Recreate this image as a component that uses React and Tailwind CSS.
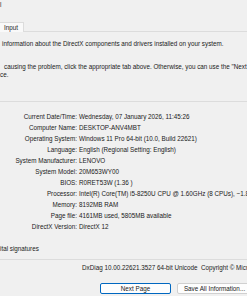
import React from 'react';

// DxDiag "System" page, cropped
const rows = [
  ['Current Date/Time:', 'Wednesday, 07 January 2026, 11:45:26'],
  ['Computer Name:', 'DESKTOP-ANV4MBT'],
  ['Operating System:', 'Windows 11 Pro 64-bit (10.0, Build 22621)'],
  ['Language:', 'English (Regional Setting: English)'],
  ['System Manufacturer:', 'LENOVO'],
  ['System Model:', '20M653WY00'],
  ['BIOS:', 'R0RET53W (1.36 )'],
  ['Processor:', 'Intel(R) Core(TM) i5-8250U CPU @ 1.60GHz (8 CPUs), ~1.8GHz'],
  ['Memory:', '8192MB RAM'],
  ['Page file:', '4161MB used, 5805MB available'],
  ['DirectX Version:', 'DirectX 12'],
];

export default function App() {
  return (
    <div className="w-[247px] h-[296px] overflow-hidden bg-[#f0f0f0] text-[#1a1a1a] text-[6.3px] font-['Liberation_Sans',Arial,sans-serif] whitespace-nowrap">
      {/* tab strip */}
      <div className="h-[22px] pt-[1px] leading-[8px]">l</div>
      <div className="h-[10px] border-b border-[#dcdcdc] flex">
        <div className="w-[24px] h-[10px] bg-[#f9f9f9] border-t border-r border-[#dcdcdc] pl-[4px] leading-[9px]">Input</div>
      </div>

      {/* intro text */}
      <div className="leading-[8px]">
        <div className="mt-[8px] pl-[2px]">information about the DirectX components and drivers installed on your system.</div>
        <div className="mt-[15px] pl-[4px]">causing the problem, click the appropriate tab above. Otherwise, you can use the "Next Page" button below to visit each page in sequence.</div>
        <div>ce.</div>
      </div>

      {/* system information group */}
      <div className="mt-[22px] border-t border-[#dcdcdc] pt-[8.5px]">
        {rows.map(([label, value]) => (
          <div key={label} className="flex h-[11.1px] leading-[11px]">
            <div className="w-[77px] text-right shrink-0">{label}</div>
            <div className="pl-[2px]">{value}</div>
          </div>
        ))}
      </div>

      <div className="mt-[12px] leading-[8px]">ital signatures</div>

      <div className="mt-[6px] border-t border-[#dcdcdc] h-[16px] leading-[16px] pl-[82px]">
        DxDiag 10.00.22621.3527 64-bit Unicode&nbsp; Copyright © Microsoft. All rights reserved.
      </div>

      {/* buttons */}
      <div className="mt-[8px] flex gap-[6px] pl-[100px]">
        <button className="w-[71px] h-[11px] shrink-0 rounded-[2px] border border-[#0067c0] bg-[#fdfdfd] text-[6.3px] leading-[9px]">Next Page</button>
        <button className="w-[75px] h-[11px] shrink-0 rounded-[2px] border border-[#d0d0d0] bg-[#fdfdfd] text-[6.3px] leading-[9px]">Save All Information...</button>
      </div>
    </div>
  );
}
